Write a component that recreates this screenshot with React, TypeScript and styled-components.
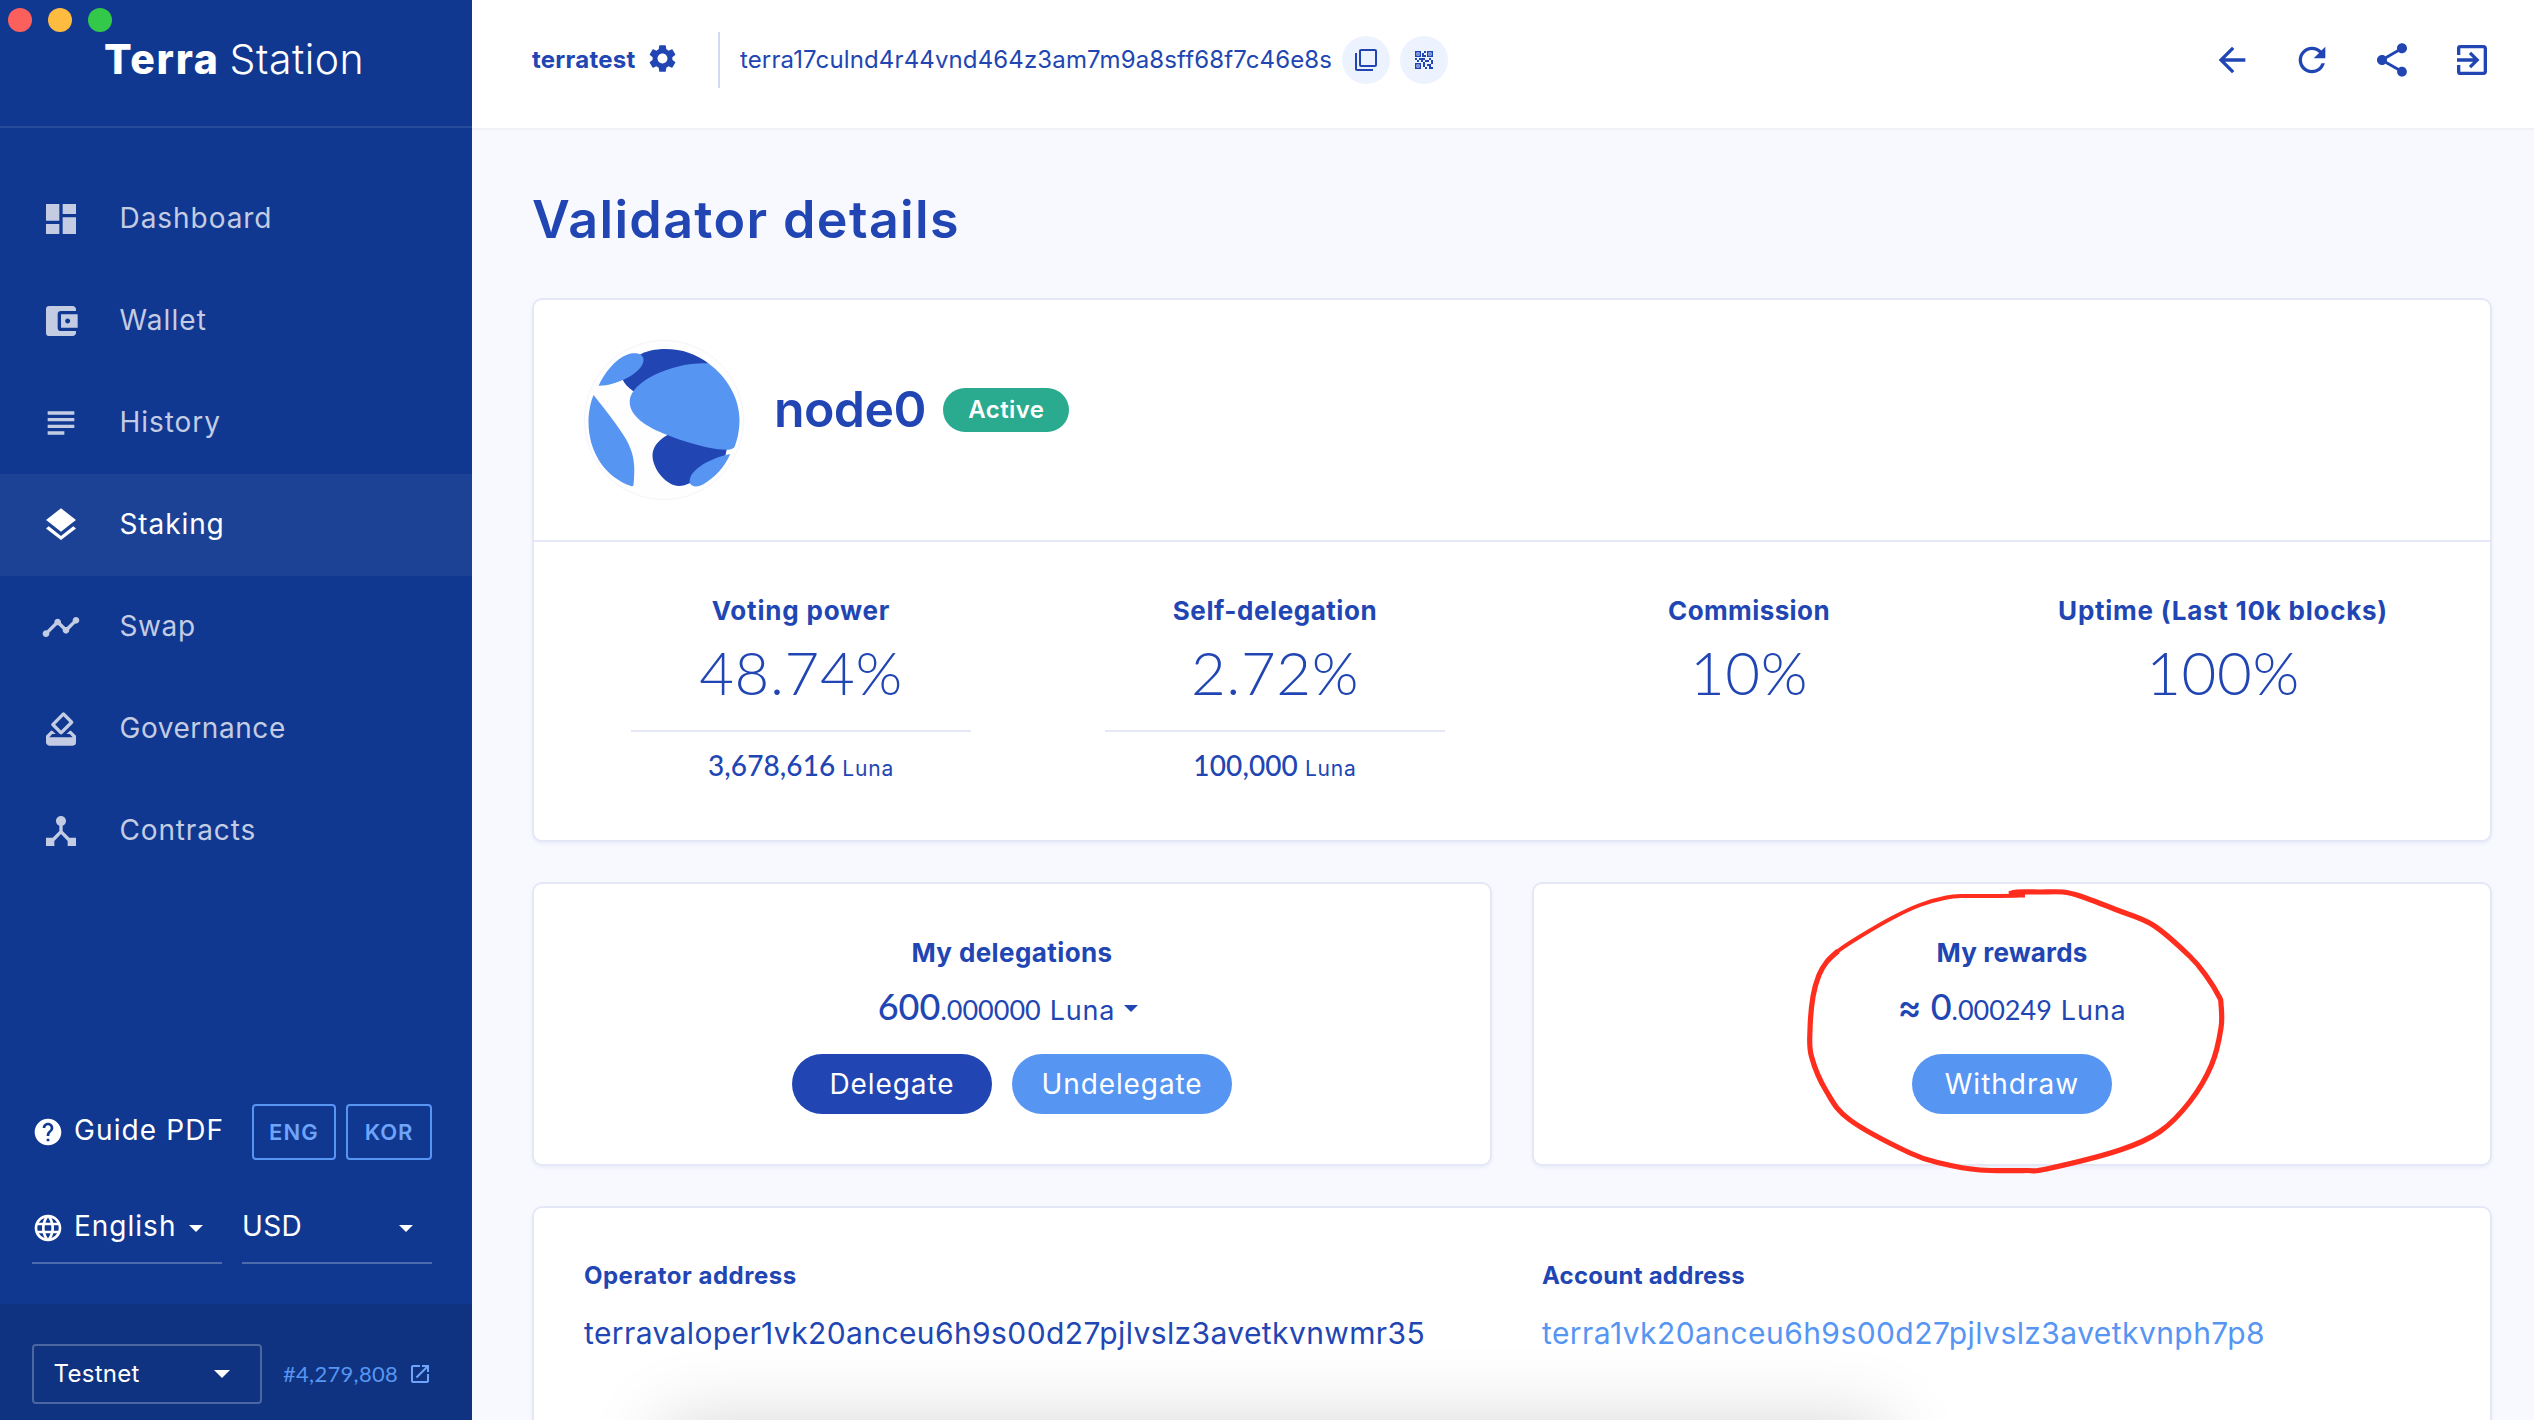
import React from 'react';
import styled, { createGlobalStyle } from 'styled-components';
import {
  MdDashboard, MdAccountBalanceWallet, MdSubject, MdLayers, MdTimeline, MdHowToVote, MdDeviceHub,
  MdArrowBack, MdRefresh, MdShare, MdExitToApp, MdSettings, MdFilterNone, MdQrCode2, MdHelp,
  MdLanguage, MdOpenInNew,
} from 'react-icons/md';

const navy = '#103891';
const blue = '#2146b3';
const sky = '#5795f3';
const line = '#e4e8f6';

const GlobalStyle = createGlobalStyle`
  * { box-sizing: border-box; }
  body { margin: 0; background: #f8f9ff; font-family: Inter, 'Liberation Sans', sans-serif; color: ${blue}; }
  svg { display: block; flex: none; }
`;

const Text = styled.span<{ $size: number; $weight?: number; $track?: number; $digits?: boolean; $tint?: string }>`
  display: block;
  white-space: nowrap;
  line-height: 1.2;
  font-family: ${p => (p.$digits ? "Lato, 'Liberation Sans', sans-serif" : 'inherit')};
  font-size: ${p => p.$size}px;
  font-weight: ${p => p.$weight ?? 400};
  letter-spacing: ${p => p.$track ?? 0}px;
  color: ${p => p.$tint ?? 'inherit'};
`;

const Window = styled.div`
  position: relative;
  display: flex;
  width: 2534px;
  height: 1420px;
  overflow: hidden;
`;

const Lights = styled.div`
  position: absolute;
  top: 8px;
  left: 8px;
  display: flex;
  gap: 16px;
`;
const Light = styled.i<{ $tint: string }>`
  width: 24px;
  height: 24px;
  border-radius: 50%;
  background: ${p => p.$tint};
`;

/* Sidebar */
const Sidebar = styled.aside`
  flex: none;
  width: 472px;
  display: flex;
  flex-direction: column;
  background: ${navy};
  color: #fff;
`;
const Brand = styled.div`
  height: 128px;
  display: flex;
  align-items: center;
  gap: 10px;
  padding: 0 0 7px 104px;
  border-bottom: 2px solid rgba(255, 255, 255, 0.1);
`;
const Nav = styled.nav`
  flex: 1;
  padding-top: 40px;
`;
const NavItem = styled.a<{ $active?: boolean }>`
  height: 102px;
  display: flex;
  align-items: center;
  gap: 38.5px;
  padding-left: 41px;
  color: ${p => (p.$active ? '#fff' : '#c3cce3')};
  background: ${p => (p.$active ? 'rgba(255,255,255,0.05)' : 'transparent')};
`;
const Preferences = styled.div`
  padding: 0 40px 40px 32px;
`;
const GuideRow = styled.div`
  display: flex;
  align-items: center;
  height: 56px;
  margin-bottom: 36px;
`;
const GuideLabel = styled.div`
  flex: 1;
  display: flex;
  align-items: center;
  gap: 10px;
  & > span { padding-bottom: 2px; }
`;
const LangButton = styled.button<{ $width: number }>`
  width: ${p => p.$width}px;
  height: 56px;
  margin-left: 10px;
  padding: 0;
  display: grid;
  place-items: center;
  font-family: inherit;
  background: none;
  color: #6ea4fa;
  border: 2px solid ${sky};
  border-radius: 4px;
`;
const SelectRow = styled.div`
  display: grid;
  grid-template-columns: 190px 190px;
  gap: 20px;
`;
const Select = styled.div`
  height: 68px;
  display: flex;
  align-items: center;
  gap: 10px;
  padding-bottom: 2px;
  border-bottom: 2px solid rgba(255, 255, 255, 0.25);
  & > span { padding-bottom: 2px; }
`;
const Caret = styled.i<{ $width: number; $height: number; $right?: number; $left?: number }>`
  width: 0;
  height: 0;
  border: solid transparent;
  border-width: ${p => p.$height}px ${p => p.$width / 2}px 0;
  border-top-color: currentColor;
  margin-left: ${p => (p.$left === undefined ? 'auto' : `${p.$left}px`)};
  margin-right: ${p => p.$right ?? 0}px;
`;
const Network = styled.div`
  height: 116px;
  display: flex;
  align-items: flex-start;
  padding: 40px 40px 0 32px;
  background: #0f3380;
  color: ${sky};
`;
const NetworkSelect = styled.div`
  width: 230px;
  height: 60px;
  display: flex;
  align-items: center;
  padding-left: 19.5px;
  color: #fff;
  border: 2px solid rgba(255, 255, 255, 0.25);
  border-radius: 4px;
`;
const Block = styled.a`
  height: 60px;
  flex: 1;
  display: flex;
  align-items: center;
  justify-content: space-between;
  padding-left: 21px;
`;

/* Main column */
const Main = styled.main`
  flex: 1;
  min-width: 0;
  display: flex;
  flex-direction: column;
`;
const TopBar = styled.header`
  flex: none;
  height: 130px;
  display: flex;
  align-items: center;
  padding: 0 42px 8px 60px;
  background: #fff;
  border-bottom: 2px solid #f0f2f6;
`;
const Wallet = styled.div`
  display: flex;
  align-items: center;
  gap: 10px;
  height: 56px;
  width: 188px;
  border-right: 2px solid #d2d9f0;
  margin-right: 20px;
  & > svg { margin-bottom: 4px; }
`;
const RoundButton = styled.button`
  flex: none;
  width: 48px;
  height: 48px;
  margin-left: 10px;
  padding: 0;
  display: grid;
  place-items: center;
  border: 0;
  border-radius: 50%;
  background: #edf3fe;
  color: ${blue};
`;
const Actions = styled.div`
  margin-left: auto;
  display: flex;
  gap: 40px;
`;
const Page = styled.div`
  flex: 1;
  display: flex;
  flex-direction: column;
  gap: 40px;
  padding: 0 42px 0 60px;
`;
const PageTitle = styled.h1`
  margin: 0;
  height: 128px;
  display: flex;
  align-items: center;
  padding-top: 52px;
`;
const Card = styled.section`
  position: relative;
  background: #fff;
  border: 2px solid ${line};
  border-radius: 10px;
  box-shadow: 0 2px 3px rgba(30, 60, 140, 0.06);
`;
const Profile = styled.div`
  display: flex;
  height: 242px;
  padding: 40px 50px;
  border-bottom: 2px solid ${line};
`;
const ProfileName = styled.div`
  display: flex;
  align-items: center;
  height: 140px;
  gap: 17.5px;
  padding-left: 30px;
  & > span:first-child { padding-bottom: 3px; }
`;
const Badge = styled.span`
  width: 126px;
  height: 44px;
  display: grid;
  place-items: center;
  border-radius: 22px;
  background: #2aaa8e;
  color: #fff;
`;
const Stats = styled.div`
  height: 298px;
  display: grid;
  grid-template-columns: repeat(4, 474px);
  padding: 53px 30px 0;
`;
const Stat = styled.div`
  display: flex;
  flex-direction: column;
  align-items: center;
  & > span:nth-child(2) { margin-top: 10px; }
`;
const StatFoot = styled.div`
  width: 340px;
  margin-top: 22px;
  padding-top: 17px;
  display: flex;
  justify-content: center;
  align-items: baseline;
  gap: 7px;
  border-top: 2px solid ${line};
`;
const Pair = styled.div`
  display: grid;
  grid-template-columns: 1fr 1fr;
  gap: 40px;
`;
const Panel = styled(Card)`
  height: 284px;
  display: flex;
  flex-direction: column;
  align-items: center;
  padding-top: 53px;
`;
const Amount = styled.div`
  height: 44px;
  margin: 17px 0 25px;
  display: flex;
  align-items: baseline;
  & > i { align-self: center; margin-top: 2px; }
`;
const Unit = styled.div`
  margin-left: 9px;
`;
const Approx = styled.div`
  margin-right: 9px;
`;
const Buttons = styled.div`
  display: flex;
  gap: 20px;
`;
const Pill = styled.button<{ $width: number; $tint: string }>`
  width: ${p => p.$width}px;
  height: 60px;
  padding: 1px 0 0;
  display: grid;
  place-items: center;
  font-family: inherit;
  border: 0;
  border-radius: 30px;
  color: #fff;
  background: ${p => p.$tint};
`;
const Marker = styled.svg`
  position: absolute;
  left: 256px;
  top: -4px;
  overflow: visible;
`;
const Addresses = styled(Card)`
  height: 320px;
  display: grid;
  grid-template-columns: 958px 1fr;
  padding: 54px 50px;
`;
const Address = styled.div`
  display: flex;
  flex-direction: column;
  gap: 24px;
`;
const DockShadow = styled.div`
  position: absolute;
  left: 672px;
  top: 1430px;
  width: 1206px;
  height: 200px;
  box-shadow: 0 0 70px 8px rgba(0, 0, 0, 0.17);
`;

const navItems = [
  { label: 'Dashboard', icon: MdDashboard, track: 0.95 },
  { label: 'Wallet', icon: MdAccountBalanceWallet, track: 1.1 },
  { label: 'History', icon: MdSubject, track: 0.95 },
  { label: 'Staking', icon: MdLayers, track: 0.9, active: true },
  { label: 'Swap', icon: MdTimeline, track: 0.6 },
  { label: 'Governance', icon: MdHowToVote, track: 0.55 },
  { label: 'Contracts', icon: MdDeviceHub, track: 0.85 },
];

const stats = [
  { label: 'Voting power', value: '48.74%', luna: '3,678,616', track: 0.8 },
  { label: 'Self-delegation', value: '2.72%', luna: '100,000', track: 0.55 },
  { label: 'Commission', value: '10%', track: 0.4 },
  { label: 'Uptime (Last 10k blocks)', value: '100%', track: 0.75 },
];

type Point = [number, number];

/* Catmull-Rom spline through the points, written as cubic segments. */
function smooth(pts: Point[]) {
  let d = `M${pts[0][0]} ${pts[0][1]}`;
  for (let i = 0; i < pts.length - 1; i++) {
    const a = pts[Math.max(0, i - 1)];
    const b = pts[i];
    const c = pts[i + 1];
    const e = pts[Math.min(pts.length - 1, i + 2)];
    d += `C${b[0] + (c[0] - a[0]) / 6} ${b[1] + (c[1] - a[1]) / 6} ${c[0] - (e[0] - b[0]) / 6} ${c[1] - (e[1] - b[1]) / 6} ${c[0]} ${c[1]}`;
  }
  return d;
}

const heavyStroke: Point[] = [
  [2009, 894], [2017, 892], [2040, 892], [2063, 892], [2080, 896], [2117, 910], [2153, 925], [2190, 956.5], [2207, 977],
  [2219, 996.5], [2221, 1004], [2221, 1028], [2211.5, 1065], [2190, 1101.5], [2160, 1131.5], [2120, 1150], [2046.5, 1169],
  [2026.5, 1170.5], [1980, 1170], [1942, 1163.5], [1910, 1153], [1850, 1120], [1826.5, 1091.5], [1811.5, 1056.5],
  [1810, 1030], [1813, 996.5], [1819, 975], [1827, 961.5], [1838, 951],
];
const lightStroke: Point[] = [
  [1827, 961.5], [1838, 951], [1860, 936.5], [1893, 917.5], [1920, 905], [1946.5, 897.5], [1965, 896], [2000, 896], [2025, 895.5],
];

const TerraGlobe = () => (
  <svg width="160" height="160" viewBox="0 0 160 160">
    <circle cx="80" cy="80" r="79.5" fill="#fefefe" stroke="#f4f5fb" />
    <path fill={blue} d="M54 15.5C62 11 71 9 81.5 9C98 9 112 14 124.4 23.3L70 56L49 51C44 47.5 40.5 44 38 38.5Z" />
    <path fill={sky} d="M14.5 45.7C20 34 31 19 43 14.8C52 11.5 60 14 59.5 20.5C58.5 33 32 46 14.5 45.7Z" />
    <path fill={blue} d="M83.4 95C73 101 68.3 108 68.5 116C69 130 83 146 95 146C99 146 102 144.8 105.6 143.3L125 128L141.5 115L142.8 109L110 96Z" />
    <path fill={sky} d="M124.4 23.3C143 37 155.5 58 155.5 80C155.5 91 153 101 150.5 107C148.5 110.5 140 110 134 109.3C118 107 98 101 83.4 95C62 87 45.5 76 45.7 61.5C46 41 90 21.5 124.4 23.3Z" />
    <path fill={sky} d="M9.6 55C18 66 30 80 39.4 95C48 108 50.3 119 50.3 130C50.3 137 49.8 142 49.4 145.5C48.8 146.3 48 146.3 47 146C21 137 4.5 112 4.5 82C4.5 72 6.5 62 9.6 55Z" />
    <path fill={sky} d="M146.2 114C141 127 130 138 119 144.5C112 148 105.5 146.5 105.6 141C106 129 128 117.5 146.2 114Z" />
  </svg>
);

export default function App() {
  return (
    <Window>
      <GlobalStyle />
      <Sidebar>
        <Brand>
          <Text $size={41} $weight={800} $track={1.7}>Terra</Text>
          <Text $size={41} $weight={300} $track={0.5}>Station</Text>
        </Brand>
        <Nav>
          {navItems.map(({ label, icon: Icon, track, active }) => (
            <NavItem key={label} $active={active}>
              <Icon size={40} />
              <Text $size={28} $track={track}>{label}</Text>
            </NavItem>
          ))}
        </Nav>
        <Preferences>
          <GuideRow>
            <GuideLabel>
              <MdHelp size={32} />
              <Text $size={28} $track={1.1}>Guide PDF</Text>
            </GuideLabel>
            <LangButton $width={84}><Text $size={22} $weight={600} $track={1.2}>ENG</Text></LangButton>
            <LangButton $width={86}><Text $size={22} $weight={600} $track={0.8}>KOR</Text></LangButton>
          </GuideRow>
          <SelectRow>
            <Select>
              <MdLanguage size={32} />
              <Text $size={28} $track={1}>English</Text>
              <Caret $width={14} $height={7} $right={19} />
            </Select>
            <Select>
              <Text $size={28} $track={0.4}>USD</Text>
              <Caret $width={14} $height={7} $right={19} />
            </Select>
          </SelectRow>
        </Preferences>
        <Network>
          <NetworkSelect>
            <Text $size={24} $track={0.3}>Testnet</Text>
            <Caret $width={16} $height={8} $right={30} />
          </NetworkSelect>
          <Block>
            <Text $size={22} $track={0.3} $digits>#4,279,808</Text>
            <MdOpenInNew size={24} color="#6ea4fa" />
          </Block>
        </Network>
      </Sidebar>

      <Main>
        <TopBar>
          <Wallet>
            <Text $size={24} $weight={700} $track={0.25}>terratest</Text>
            <MdSettings size={33} />
          </Wallet>
          <Text $size={24} $track={0.13}>terra17culnd4r44vnd464z3am7m9a8sff68f7c46e8s</Text>
          <RoundButton><MdFilterNone size={24} /></RoundButton>
          <RoundButton><MdQrCode2 size={24} /></RoundButton>
          <Actions>
            <MdArrowBack size={40} />
            <MdRefresh size={40} />
            <MdShare size={40} />
            <MdExitToApp size={40} />
          </Actions>
        </TopBar>

        <Page>
          <PageTitle><Text $size={52} $weight={600} $track={1.35}>Validator details</Text></PageTitle>

          <Card>
            <Profile>
              <TerraGlobe />
              <ProfileName>
                <Text $size={50} $weight={600} $track={-0.6}>node0</Text>
                <Badge><Text $size={24} $weight={600} $track={0.4}>Active</Text></Badge>
              </ProfileName>
            </Profile>
            <Stats>
              {stats.map(s => (
                <Stat key={s.label}>
                  <Text $size={26} $weight={700} $track={s.track}>{s.label}</Text>
                  <Text $size={60} $weight={300} $track={0.6} $digits>{s.value}</Text>
                  {s.luna && (
                    <StatFoot>
                      <Text $size={28} $weight={500} $track={0.1} $digits>{s.luna}</Text>
                      <Text $size={21} $track={0.8}>Luna</Text>
                    </StatFoot>
                  )}
                </Stat>
              ))}
            </Stats>
          </Card>

          <Pair>
            <Panel>
              <Text $size={26} $weight={700} $track={0.4}>My delegations</Text>
              <Amount>
                <Text $size={36} $weight={500} $digits>600</Text>
                <Text $size={27} $digits>.000000</Text>
                <Unit><Text $size={27} $track={0.8}>Luna</Text></Unit>
                <Caret $width={14} $height={7} $left={9} $right={8} />
              </Amount>
              <Buttons>
                <Pill $width={200} $tint={blue}><Text $size={28} $track={0.9}>Delegate</Text></Pill>
                <Pill $width={220} $tint={sky}><Text $size={28} $track={0.9}>Undelegate</Text></Pill>
              </Buttons>
            </Panel>
            <Panel>
              <Text $size={26} $weight={700} $track={0.15}>My rewards</Text>
              <Amount>
                <Approx><Text $size={36} $weight={500}>≈</Text></Approx>
                <Text $size={36} $weight={500} $digits>0</Text>
                <Text $size={27} $digits>.000249</Text>
                <Unit><Text $size={27} $track={0.8}>Luna</Text></Unit>
              </Amount>
              <Pill $width={200} $tint={sky}><Text $size={28} $track={1}>Withdraw</Text></Pill>
              <Marker width="450" height="310" viewBox="1790 880 450 310" fill="none" stroke="#ff2d1d" strokeLinejoin="round">
                <path d={smooth(heavyStroke)} strokeWidth="5.2" />
                <path d={smooth(lightStroke)} strokeWidth="4" />
              </Marker>
            </Panel>
          </Pair>

          <Addresses>
            <Address>
              <Text $size={24} $weight={700} $track={0.5}>Operator address</Text>
              <Text $size={30} $track={0.39}>terravaloper1vk20anceu6h9s00d27pjlvslz3avetkvnwmr35</Text>
            </Address>
            <Address>
              <Text $size={24} $weight={700} $track={0.25}>Account address</Text>
              <Text $size={30} $track={0.43} $tint={sky}>terra1vk20anceu6h9s00d27pjlvslz3avetkvnph7p8</Text>
            </Address>
          </Addresses>
        </Page>
      </Main>

      <DockShadow />
      <Lights>
        <Light $tint="#fc605c" />
        <Light $tint="#fdbc40" />
        <Light $tint="#34c84a" />
      </Lights>
    </Window>
  );
}
